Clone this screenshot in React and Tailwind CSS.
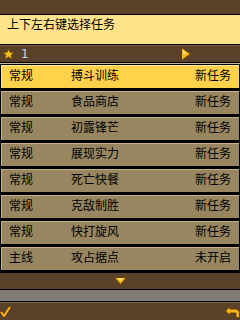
import React from 'react';

const tasks = [
  { type: '常规', name: '搏斗训练', state: '新任务' },
  { type: '常规', name: '食品商店', state: '新任务' },
  { type: '常规', name: '初露锋芒', state: '新任务' },
  { type: '常规', name: '展现实力', state: '新任务' },
  { type: '常规', name: '死亡快餐', state: '新任务' },
  { type: '常规', name: '克敌制胜', state: '新任务' },
  { type: '常规', name: '快打旋风', state: '新任务' },
  { type: '主线', name: '攻占据点', state: '未开启' },
];

function Star() {
  return (
    <svg width="11" height="10" viewBox="0 0 11 10">
      <path d="M5.5 0 L7 3.4 L11 3.6 L8 6 L9 10 L5.5 7.8 L2 10 L3 6 L0 3.6 L4 3.4 Z" fill="#f7c21c" stroke="#7a4a00" strokeWidth="0.6" />
    </svg>
  );
}

export default function App() {
  return (
    <div className="w-[240px] h-[320px] flex flex-col bg-[#5a4129] overflow-hidden text-black"
         style={{ fontFamily: '"Noto Sans CJK SC", "Liberation Sans", sans-serif' }}>
      {/* top strip */}
      <div className="h-[15px] bg-[#5a4129] border-b border-black shrink-0" />

      {/* hint panel */}
      <div className="h-[30px] bg-[#ffe38a] border-b border-black shrink-0 pl-[7px] pt-[2px] text-[12px] leading-[14px]">
        上下左右键选择任务
      </div>

      {/* page bar */}
      <div className="h-[18px] shrink-0 bg-[#5a4129] border-t border-[#7a5e3e] border-b border-b-black flex items-center relative">
        <div className="ml-[3px] mt-[-1px]"><Star /></div>
        <span className="ml-[7px] text-[12px] leading-none text-[#c9d4f2]" style={{ fontFamily: '"DejaVu Sans", sans-serif' }}>1</span>
        <svg className="absolute left-[181px] top-[1px]" width="10" height="14" viewBox="0 0 10 14">
          <path d="M0.5 0.5 L9.5 7 L0.5 13.5 Z" fill="#f4b71a" stroke="#6b3d00" strokeWidth="1" />
          <path d="M2 3 L6 7 L2 7 Z" fill="#ffe27a" />
        </svg>
      </div>

      {/* list */}
      <div className="flex flex-col bg-[#c9b88e] pt-[1px] shrink-0">
        {tasks.map((t, i) => (
          <div key={i}
               className={`h-[26px] border border-black border-b-2 flex ${i === 0 ? 'bg-[#ffd24c]' : 'bg-[#978660]'}`}>
            <div className={`flex-1 flex items-start pt-[1px] border-t border-l ${i === 0 ? 'border-[#ffe99a]' : 'border-[#c2b184]'} text-[12px] leading-[16px]`}>
              <span className="w-[62px] pl-[7px]">{t.type}</span>
              <span className="flex-1 pl-[7px]">{t.name}</span>
              <span className="pr-[8px]">{t.state}</span>
            </div>
          </div>
        ))}
      </div>

      {/* scroll bar */}
      <div className="h-[18px] shrink-0 bg-[#5a4129] border-t border-black border-b border-b-black flex items-center justify-center">
        <svg width="13" height="8" viewBox="0 0 13 8">
          <path d="M0.5 0.5 L12.5 0.5 L6.5 7.5 Z" fill="#f4b71a" stroke="#6b3d00" strokeWidth="1" />
          <path d="M3 1.5 L10 1.5 L6.5 4 Z" fill="#ffe27a" />
        </svg>
      </div>

      {/* gray gap */}
      <div className="h-[12px] shrink-0 bg-[#7f7b72] border-b border-black" />

      {/* softkey bar */}
      <div className="flex-1 bg-[#5a4129] border-t border-[#7a5e3e] flex items-center justify-between">
        <svg width="12" height="12" viewBox="0 0 12 12">
          <path d="M1 6 L4 10 L10 1" fill="none" stroke="#6b3d00" strokeWidth="3.5" strokeLinejoin="round" />
          <path d="M1 6 L4 10 L10 1" fill="none" stroke="#f4b71a" strokeWidth="2" strokeLinejoin="round" />
        </svg>
        <svg width="15" height="12" viewBox="0 0 15 12">
          <path d="M0.5 5 L5 0.5 L5 3 L11 3 Q14.5 3 14.5 7 L14.5 11.5 L11 11.5 L11 7.5 Q11 7 10 7 L5 7 L5 9.5 Z" fill="#f4b71a" stroke="#6b3d00" strokeWidth="1" />
        </svg>
      </div>
    </div>
  );
}
